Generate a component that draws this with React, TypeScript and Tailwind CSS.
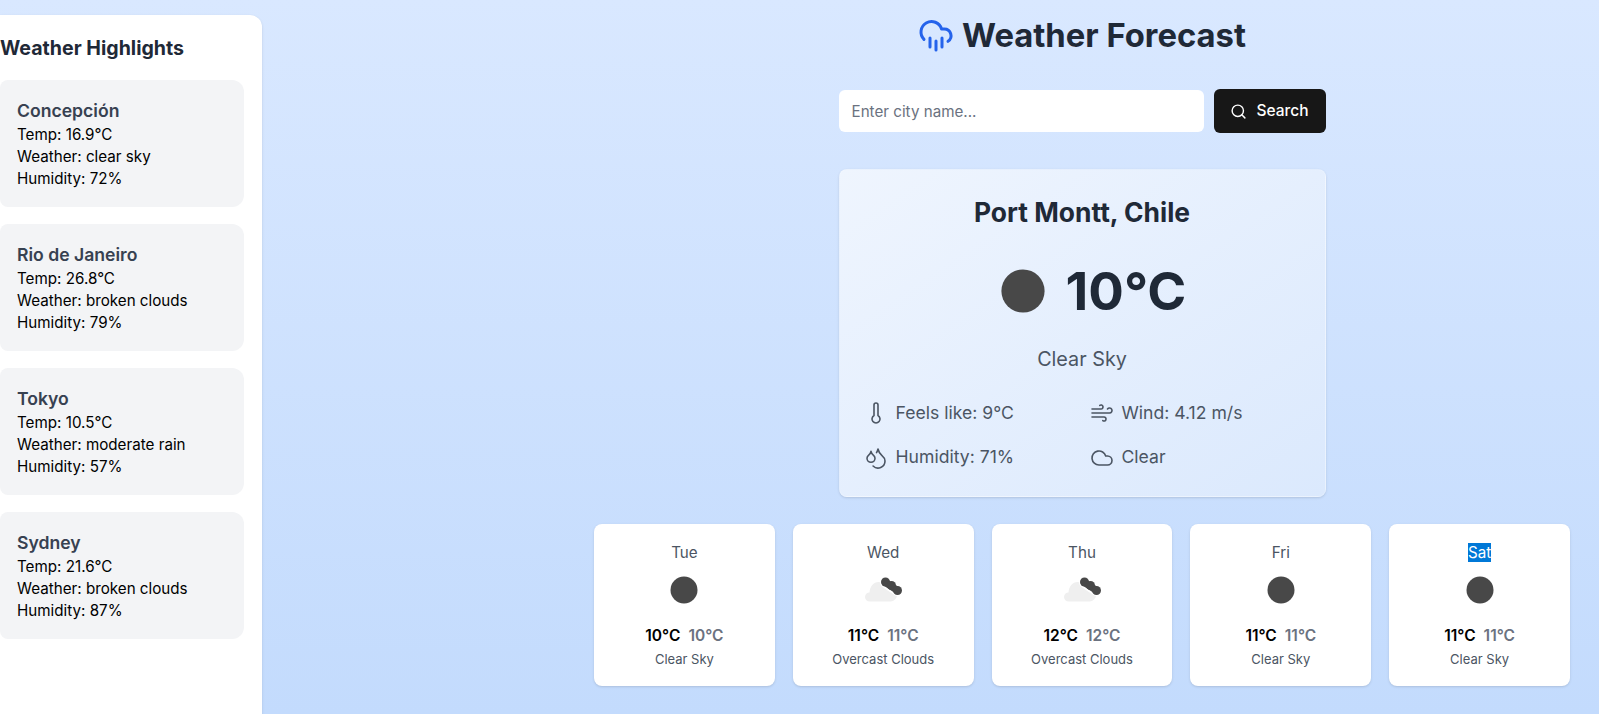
import { Cloud, CloudRain, Droplets, Search, Thermometer, Wind } from "lucide-react";

type Highlight = { city: string; temp: string; weather: string; humidity: string };
type Day = { name: string; high: string; low: string; label: string; icon: "clear" | "clouds"; selected?: boolean };

const highlights: Highlight[] = [
  { city: "Concepción", temp: "16.9", weather: "clear sky", humidity: "72" },
  { city: "Rio de Janeiro", temp: "26.8", weather: "broken clouds", humidity: "79" },
  { city: "Tokyo", temp: "10.5", weather: "moderate rain", humidity: "57" },
  { city: "Sydney", temp: "21.6", weather: "broken clouds", humidity: "87" },
];

const days: Day[] = [
  { name: "Tue", high: "10", low: "10", label: "Clear Sky", icon: "clear" },
  { name: "Wed", high: "11", low: "11", label: "Overcast Clouds", icon: "clouds" },
  { name: "Thu", high: "12", low: "12", label: "Overcast Clouds", icon: "clouds" },
  { name: "Fri", high: "11", low: "11", label: "Clear Sky", icon: "clear" },
  { name: "Sat", high: "11", low: "11", label: "Clear Sky", icon: "clear", selected: true },
];

function ClearIcon({ size }: { size: number }) {
  return (
    <svg width={size} height={size} viewBox="0 0 50 50">
      <circle cx="25" cy="25" r="13.5" fill="#484848" />
    </svg>
  );
}

function CloudsIcon() {
  return (
    <svg width="50" height="50" viewBox="0 0 50 50">
      <path
        d="M12 36.500c-3 0-5-2-5-4.500s2-4.500 4.500-4.500c.5-6 4-10.500 9-10.500s8 3 9 7c1-.5 2-.5 3-.5 3.500 0 6.500 2.500 6.500 6.300s-3 6.700-6.500 6.700z"
        fill="#efefef"
      />
      <path d="M27.500 17.500L33.500 21.500L39.500 25.500" fill="none" stroke="#ffffff" strokeWidth="11" strokeLinecap="round" />
      <path d="M27.500 17.500L33.500 21.500L39.500 25.500" fill="none" stroke="#484848" strokeWidth="7" strokeLinecap="round" />
      <g fill="#484848">
        <circle cx="27.500" cy="17" r="4.500" />
        <circle cx="33.500" cy="20.500" r="4.500" />
        <circle cx="39.500" cy="25.500" r="4.500" />
      </g>
    </svg>
  );
}

function Detail({ icon, text }: { icon: React.ReactNode; text: string }) {
  return (
    <div className="flex items-center gap-2 text-[17.6px] text-[#4b5563]">
      {icon}
      <span>{text}</span>
    </div>
  );
}

export default function App() {
  return (
    <div className="flex h-screen justify-between overflow-hidden bg-gradient-to-b from-[#d9e8ff] to-[#c3dbfd] font-['Inter',sans-serif]">
      {/* Sidebar */}
      <aside className="mt-[15px] h-full w-[262px] shrink-0 rounded-tr-xl bg-white pr-[18px] pt-[19px] shadow-sm">
        <h2 className="text-[19.6px] leading-7 font-bold text-[#1f2937]">Weather Highlights</h2>
        <div className="mt-[18px] flex flex-col gap-[17px]">
          {highlights.map((item) => (
            <div key={item.city} className="h-[127px] rounded-r-xl rounded-l-lg bg-[#f3f4f6] px-[17px] pt-[18px] text-black">
              <h3 className="text-[17.6px] leading-[26px] font-semibold text-[#374151]">{item.city}</h3>
              <p className="text-[15.2px] leading-[22px]">Temp: {item.temp}°C</p>
              <p className="text-[15.2px] leading-[22px]">Weather: {item.weather}</p>
              <p className="text-[15.2px] leading-[22px]">Humidity: {item.humidity}%</p>
            </div>
          ))}
        </div>
      </aside>

      {/* Main */}
      <main className="mr-[29px] flex w-[976px] shrink-0 flex-col items-center">
        <h1 className="mt-[15px] flex items-center gap-2 text-[32.8px] leading-10 font-bold text-[#1f2937]">
          <CloudRain size={36} className="text-[#2563eb]" />
          Weather Forecast
        </h1>

        <div className="mt-[34px] flex w-[487px] items-center gap-[10px]">
          <input
            placeholder="Enter city name..."
            className="h-[42px] min-w-0 flex-1 rounded-md bg-white px-[13px] text-[15.2px] text-gray-900 outline-none placeholder:text-[#6b7280]"
          />
          <button className="flex h-[44px] w-[112px] items-center justify-center gap-[9px] rounded-md bg-[#171717] text-[15.5px] font-medium text-white">
            <Search size={17} />
            Search
          </button>
        </div>

        <section className="mt-[36px] h-[328px] w-[487px] rounded-lg border border-white/20 bg-gradient-to-br from-[#eff5fe] to-[#dbe9fd] px-6 pt-[26px] shadow-sm">
          <h2 className="text-center text-[26.4px] leading-8 font-bold text-[#1f2937]">Port Montt, Chile</h2>
          <div className="mt-[23px] flex items-center justify-center gap-[3px] pl-[5px]">
            <ClearIcon size={80} />
            <span className="text-[52.8px] leading-[80px] font-bold text-[#1f2937]">10°C</span>
          </div>
          <p className="mt-[14px] text-center text-[19.8px] leading-7 text-[#4b5563]">Clear Sky</p>
          <div className="mt-[27px] grid grid-cols-[226px_1fr] gap-y-[18px]">
            <Detail icon={<Thermometer size={24} strokeWidth={1.6} />} text="Feels like: 9°C" />
            <Detail icon={<Wind size={24} strokeWidth={1.6} />} text="Wind: 4.12 m/s" />
            <Detail icon={<Droplets size={24} strokeWidth={1.6} />} text="Humidity: 71%" />
            <Detail icon={<Cloud size={24} strokeWidth={1.6} />} text="Clear" />
          </div>
        </section>

        <section className="mt-[27px] grid w-full grid-cols-5 gap-[18px]">
          {days.map((day) => (
            <div key={day.name} className="flex h-[162px] flex-col items-center rounded-lg bg-white pt-[19px] shadow-sm">
              <p className="text-[15.2px] leading-5 text-[#4b5563]">
                {day.selected ? <span className="bg-[#0078d7] text-white">{day.name}</span> : day.name}
              </p>
              <div className="mt-[2px] flex h-[50px] items-center justify-center">
                {day.icon === "clear" ? <ClearIcon size={50} /> : <CloudsIcon />}
              </div>
              <div className="mt-[9px] flex gap-2 text-[15.5px] leading-6 font-semibold">
                <span className="text-black">{day.high}°C</span>
                <span className="text-[#6b7280]">{day.low}°C</span>
              </div>
              <p className="mt-[1px] text-[13px] leading-5 text-[#4b5563]">{day.label}</p>
            </div>
          ))}
        </section>
      </main>
    </div>
  );
}
